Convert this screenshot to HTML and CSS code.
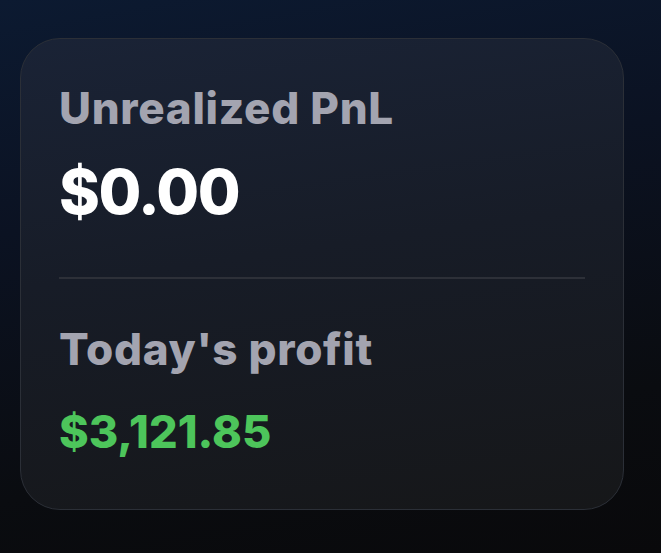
FILE: index.html
```html
<!DOCTYPE html>
<html lang="en">
<head>
  <meta charset="UTF-8">
  <meta name="viewport" content="width=device-width, initial-scale=1.0">
  <title>PnL</title>
  <link rel="stylesheet" href="styles.css">
</head>
<body>
  <div class="card">
    <div class="stat">
      <p class="label">Unrealized PnL</p>
      <p class="value">$0.00</p>
    </div>
    <hr class="divider">
    <div class="stat">
      <p class="label">Today's profit</p>
      <p class="value profit">$3,121.85</p>
    </div>
  </div>
</body>
</html>
```

FILE: styles.css
```css
html, body {
  height: 100%;
}
body {
  margin: 0;
  padding: 38px 37px 0 20px;
  box-sizing: border-box;
  font-family: Inter, "Noto Sans", sans-serif;
  background: linear-gradient(170deg, #0c1a31 0%, #0b1222 35%, #0a0c10 75%, #09090b 100%);
}
.card {
  height: 472px;
  box-sizing: border-box;
  padding: 47px 38px 0 38px;
  border: 1.5px solid #2b2f37;
  border-radius: 40px;
  background: linear-gradient(172deg, #1a2336 0%, #171c27 45%, #161719 100%);
}
.label {
  margin: 0;
  font-size: 44px;
  line-height: 1;
  font-weight: 800;
  letter-spacing: 0.7px;
  color: #a3a4b0;
}
.value {
  margin: 31px 0 0;
  font-size: 62px;
  line-height: 1;
  font-weight: 800;
  letter-spacing: -1.5px;
  color: #ffffff;
}
.value.profit {
  margin-top: 38px;
  font-size: 45px;
  letter-spacing: 0;
  color: #4dc55b;
}
.divider {
  margin: 54px 0 48px;
  border: 0;
  height: 2px;
  background: #2d3038;
}
```
